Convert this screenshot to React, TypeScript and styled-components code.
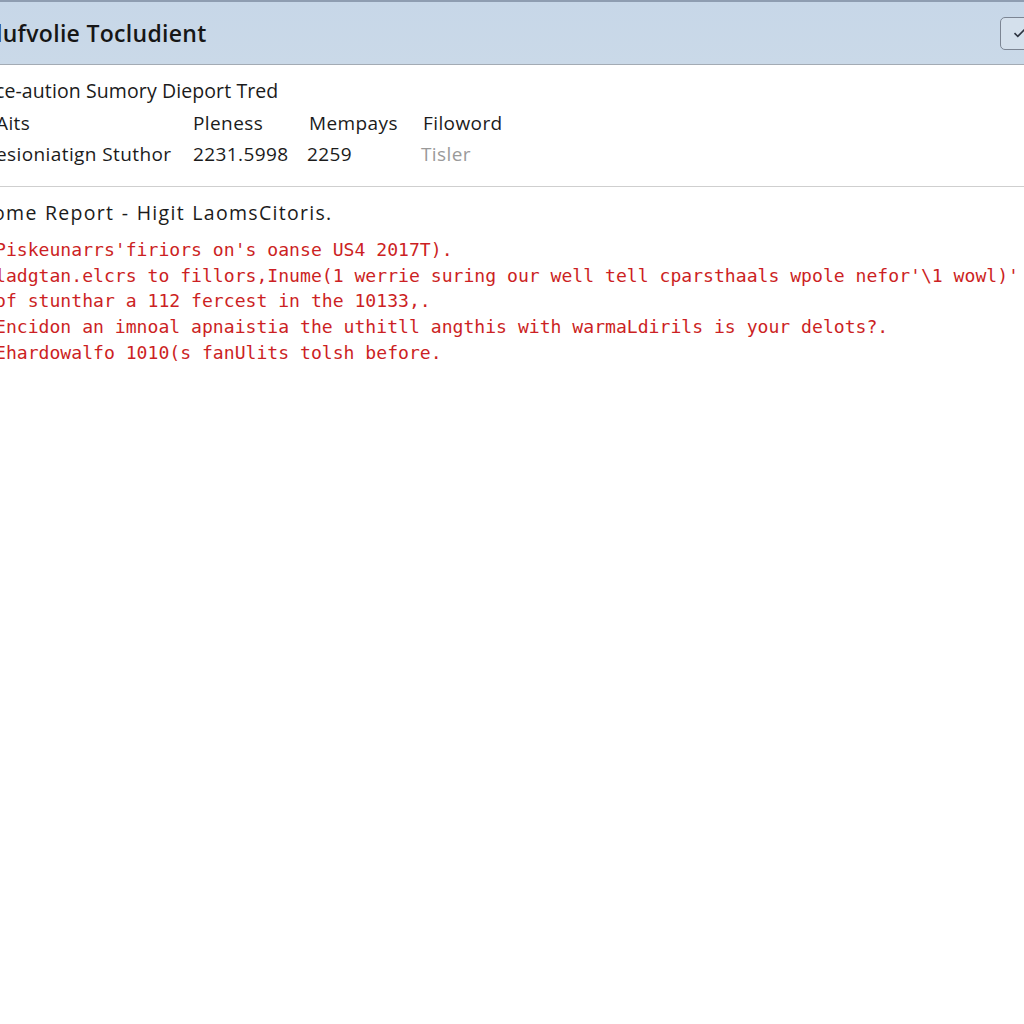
import React from "react";
import styled, { createGlobalStyle } from "styled-components";

const GlobalStyle = createGlobalStyle`
  html, body {
    margin: 0;
    padding: 0;
    background: #ffffff;
  }
  body {
    font-family: "Open Sans", "Liberation Sans", sans-serif;
    color: #1b1b1b;
    overflow: hidden;
  }
`;

const Page = styled.div`
  width: 1024px;
  height: 1024px;
  overflow: hidden;
  background: #ffffff;
`;

const TitleBar = styled.header`
  height: 65px;
  box-sizing: border-box;
  border-top: 2px solid #8e9db1;
  border-bottom: 1px solid #a3abb4;
  background: linear-gradient(#c7d7e8, #cad9e8);
  display: flex;
  align-items: center;
  justify-content: space-between;
  overflow: hidden;
`;

const Title = styled.h1`
  margin: 0 0 0 -4px;
  font-size: 23px;
  font-weight: 600;
  letter-spacing: 0.3px;
  color: #161616;
`;

const CheckButton = styled.button`
  width: 40px;
  height: 33px;
  margin-right: -16px;
  border: 1px solid #7c8593;
  border-radius: 5px;
  background: #d4e0ec;
  display: flex;
  align-items: center;
  justify-content: flex-start;
  padding: 0 0 0 12px;
  color: #2d3440;
`;

const Summary = styled.section`
  padding: 12px 0 0;
  height: 122px;
  box-sizing: border-box;
  border-bottom: 1px solid #cfcfcf;
`;

const SummaryTitle = styled.div`
  font-size: 19.5px;
  line-height: 28px;
  margin-left: -5px;
  letter-spacing: 0.1px;
`;

const Grid = styled.div`
  display: grid;
  grid-template-columns: 193px 115px 114px auto;
  margin-top: 3px;
`;

const Cell = styled.div<{ $muted?: boolean; $shift?: number }>`
  font-size: 19px;
  line-height: 31px;
  letter-spacing: 0.4px;
  color: ${(p) => (p.$muted ? "#9a9a9a" : "#1b1b1b")};
  margin-left: ${(p) => p.$shift ?? 0}px;
  white-space: nowrap;
`;

const Report = styled.section`
  padding-top: 13px;
`;

const ReportTitle = styled.div`
  font-size: 19.5px;
  line-height: 26px;
  margin-left: -7px;
  letter-spacing: 1.3px;
  word-spacing: 1px;
`;

const Body = styled.pre`
  margin: 11px 0 0 -5px;
  font-family: "DejaVu Sans Mono", "Liberation Mono", monospace;
  font-size: 18.1px;
  line-height: 25.7px;
  color: #cc1f24;
  white-space: pre;
`;

const lines = [
  "Piskeunarrs'firiors on's oanse US4 2017T).",
  "ladgtan.elcrs to fillors,Inume(1 werrie suring our well tell cparsthaals wpole nefor'\\1 wowl)'",
  "of stunthar a 112 fercest in the 10133,.",
  "Encidon an imnoal apnaistia the uthitll angthis with warmaLdirils is your delots?.",
  "Ehardowalfo 1010(s fanUlits tolsh before.",
];

export default function App() {
  return (
    <Page>
      <GlobalStyle />
      <TitleBar>
        <Title>lufvolie Tocludient</Title>
        <CheckButton aria-label="Confirm">
          <svg width="13" height="10" viewBox="0 0 13 10" fill="none">
            <path d="M1.5 5.2 L4.8 8.3 L11.5 1.5" stroke="#2d3440" strokeWidth="1.6" />
          </svg>
        </CheckButton>
      </TitleBar>
      <Summary>
        <SummaryTitle>ce-aution Sumory Dieport Tred</SummaryTitle>
        <Grid>
          <Cell $shift={-4}>Aits</Cell>
          <Cell>Pleness</Cell>
          <Cell $shift={1}>Mempays</Cell>
          <Cell $shift={1}>Filoword</Cell>
          <Cell $shift={-4}>esioniatign Stuthor</Cell>
          <Cell>2231.5998</Cell>
          <Cell $shift={-1}>2259</Cell>
          <Cell $muted $shift={-1}>Tisler</Cell>
        </Grid>
      </Summary>
      <Report>
        <ReportTitle>ome Report - Higit LaomsCitoris.</ReportTitle>
        <Body>{lines.join("\n")}</Body>
      </Report>
    </Page>
  );
}
